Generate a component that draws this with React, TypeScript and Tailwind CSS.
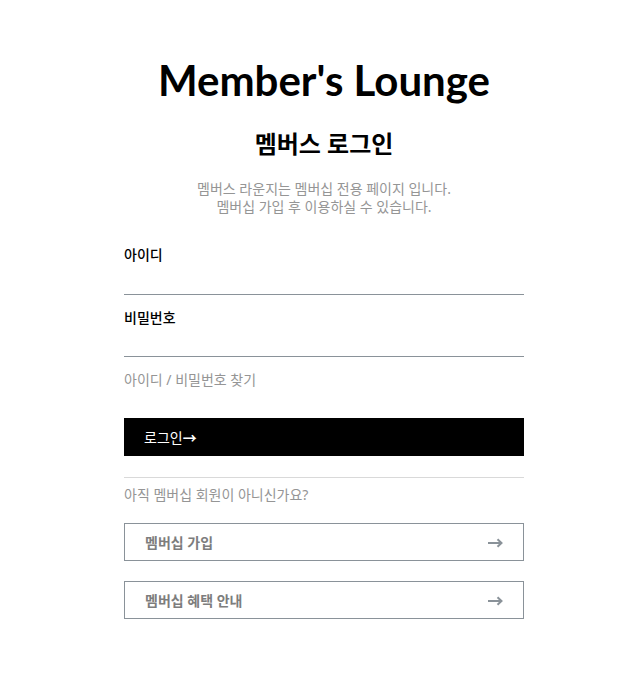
const font = { fontFamily: '"Noto Sans", "Noto Sans CJK KR", sans-serif' };

const Arrow = () => (
  <svg width="15" height="10" viewBox="0 0 15 10" fill="none" stroke="#8a9299" strokeWidth="2">
    <path d="M0 5h13.5" />
    <path d="M9.5 1.2l4 3.8-4 3.8" />
  </svg>
);

export default function App() {
  return (
    <div className="min-h-screen bg-white flex justify-center pl-[11px]" style={font}>
      <div className="w-[400px] pt-[52px]">
        {/* 타이틀 */}
        <h1 className="text-center text-[42px] leading-[56px] font-bold text-black" style={{ fontFamily: "Lato, sans-serif" }}>
          Member's Lounge
        </h1>
        <h2 className="mt-[19px] text-center text-[24px] leading-[34px] font-bold text-black">멤버스 로그인</h2>
        <p className="mt-[19px] text-center text-[14px] leading-[18px] text-[#959595]">
          멤버스 라운지는 멤버십 전용 페이지 입니다.
          <br />
          멤버십 가입 후 이용하실 수 있습니다.
        </p>

        {/* 로그인 폼 */}
        <div className="mt-[29px]">
          <label className="block text-[14px] leading-[20px] font-medium text-black">아이디</label>
          <input className="block w-full h-[30px] border-b border-[#8a9299] outline-none" />
        </div>
        <div className="mt-[13px]">
          <label className="block text-[14px] leading-[20px] font-medium text-black">비밀번호</label>
          <input type="password" className="block w-full h-[29px] border-b border-[#8a9299] outline-none" />
        </div>
        <p className="mt-[13px] text-[14px] leading-[20px] text-[#959595]">아이디 / 비밀번호 찾기</p>

        <button className="mt-[28px] w-full h-[38px] bg-black text-white text-[14px] text-left px-[20px] flex items-center">
          로그인<span className="font-bold">→</span>
        </button>

        <div className="mt-[21px] border-t border-[#d9d9d9]" />
        <p className="mt-[7px] text-[14px] leading-[20px] text-[#959595]">아직 멤버십 회원이 아니신가요?</p>

        {/* 멤버십 링크 */}
        <div className="mt-[18px] flex flex-col gap-[20px]">
          {["멤버십 가입", "멤버십 혜택 안내"].map((label) => (
            <a
              key={label}
              className="h-[38px] border border-[#8a9299] flex items-center justify-between pl-[20px] pr-[20px] text-[14px] font-bold text-[#7d7d7d]"
            >
              <span>{label}</span>
              <span className="mt-[2px]">
                <Arrow />
              </span>
            </a>
          ))}
        </div>
      </div>
    </div>
  );
}
